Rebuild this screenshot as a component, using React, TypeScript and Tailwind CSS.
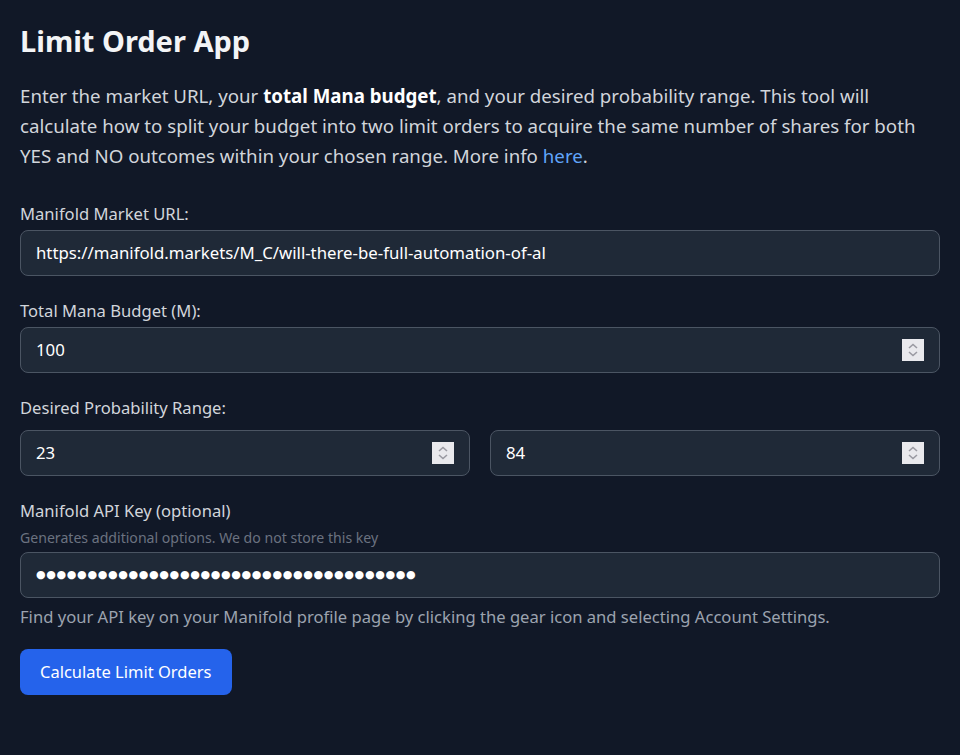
import type { ReactNode } from "react";

const font = { fontFamily: '"Noto Sans", "Open Sans", sans-serif' };

function Spinner() {
  return (
    <div className="flex h-[22px] w-[22px] shrink-0 items-center justify-center bg-[#e9e9ed]">
      <svg width="14" height="18" viewBox="0 0 14 18" fill="none" stroke="#9a9aa2" strokeWidth="1.6">
        <path d="M3 7 L7 3.5 L11 7" />
        <path d="M3 11 L7 14.5 L11 11" />
      </svg>
    </div>
  );
}

function Field({ value, spinner, dots }: { value: string; spinner?: boolean; dots?: boolean }) {
  return (
    <div className="flex h-[46px] w-full items-center rounded-lg border border-[#4b5563] bg-[#1f2937] px-[15px]">
      <input
        type="text"
        defaultValue={value}
        readOnly
        className={
          dots
            ? "min-w-0 flex-1 bg-transparent text-[11px] tracking-[0.68px] text-white outline-none"
            : "min-w-0 flex-1 bg-transparent text-[16.8px] text-white outline-none"
        }
        style={dots ? { fontFamily: '"DejaVu Sans", sans-serif' } : font}
      />
      {spinner && <Spinner />}
    </div>
  );
}

function Label({ children, className = "mb-1" }: { children: ReactNode; className?: string }) {
  return <label className={`block text-[16.6px] leading-[24px] text-[#d1d5db] ${className}`}>{children}</label>;
}

export default function App() {
  return (
    <div className="min-h-screen bg-[#111827] p-5" style={font}>
      <h1 className="text-[29px] font-bold leading-[42px] text-[#f3f4f6]">Limit Order App</h1>

      <p className="mt-[19px] text-[18.7px] leading-[30px] text-[#d1d5db]">
        Enter the market URL, your <strong className="font-bold text-white">total Mana budget</strong>, and your
        desired probability range. This tool will calculate how to split your budget into two limit orders to acquire
        the same number of shares for both YES and NO outcomes within your chosen range. More info{" "}
        <a href="#" className="text-[#60a5fa]">
          here
        </a>
        .
      </p>

      <div className="mt-[31px] flex flex-col gap-[23px]">
        <div>
          <Label>Manifold Market URL:</Label>
          <Field value="https://manifold.markets/M_C/will-there-be-full-automation-of-al" />
        </div>

        <div>
          <Label>Total Mana Budget (M):</Label>
          <Field value="100" spinner />
        </div>

        <div>
          <Label className="mb-[10px]">Desired Probability Range:</Label>
          <div className="grid grid-cols-2 gap-5">
            <Field value="23" spinner />
            <Field value="84" spinner />
          </div>
        </div>

        <div>
          <Label className="mb-[5px]">Manifold API Key (optional)</Label>
          <p className="mb-1 text-[14.1px] leading-[20px] text-[#6b7280]">
            Generates additional options. We do not store this key
          </p>
          <Field value={"\u25CF".repeat(37)} dots />
          <p className="mt-[7px] text-[16.6px] leading-[24px] text-[#9ca3af]">
            Find your API key on your Manifold profile page by clicking the gear icon and selecting Account Settings.
          </p>
        </div>
      </div>

      <button className="mt-5 h-[46px] rounded-lg bg-[#2563eb] px-5 text-[16.5px] text-white">
        Calculate Limit Orders
      </button>
    </div>
  );
}
